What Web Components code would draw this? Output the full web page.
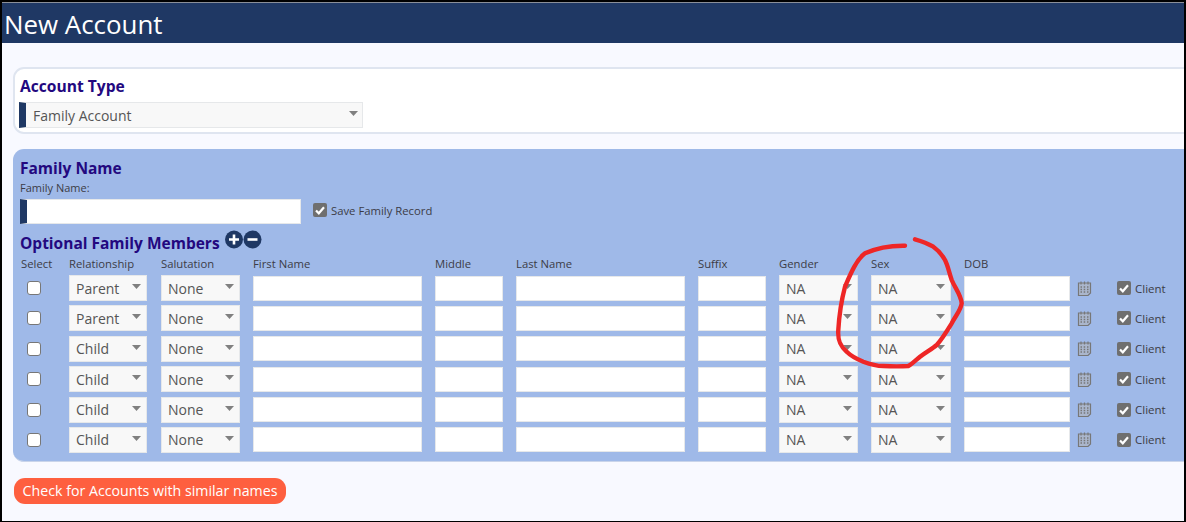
<!DOCTYPE html>
<html lang="en">
<head>
  <meta charset="UTF-8">
  <title>New Account</title>
  <style>
    html, body {
      margin: 0;
      height: 522px;
      overflow: hidden;
      background: #000;
    }
    body {
      font-family: "Open Sans", "Liberation Sans", sans-serif;
    }
  </style>
</head>
<body>
  <account-page>
    <title-bar>New Account</title-bar>
    <form-card heading="Account Type">
      <pick-list value="Family Account" marked style="width:344px"></pick-list>
    </form-card>
    <family-panel></family-panel>
    <orange-button>Check for Accounts with similar names</orange-button>
  </account-page>

  <script>
    const ARROW = '<svg width="9" height="5" viewBox="0 0 9 5"><path d="M0 0h9L4.500 5z" fill="#808080"/></svg>';
    const CHECK = '<svg width="14" height="14" viewBox="0 0 14 14"><rect width="14" height="14" rx="2" fill="#6f6f6f"/><path d="M3 7.500l2.800 2.800L11 4.200" fill="none" stroke="#fff" stroke-width="2.200"/></svg>';
    const COLUMNS = '52px 78px 14px 79px 13px 169px 13px 68px 13px 169px 13px 68px 13px 79px 13px 80px 13px 106px 7px 15px 25px 14px 4px auto';

    class AccountPage extends HTMLElement {
      constructor() {
        super();
        this.attachShadow({ mode: 'open' }).innerHTML = `
          <style>
            :host {
              display: block;
              position: relative;
              box-sizing: border-box;
              width: 1182px;
              height: 519px;
              margin: 2px 2px 1px 2px;
              border-top: 1px solid #8a8f99;
              background: #f8f9ff;
              overflow: hidden;
            }
            svg {
              position: absolute;
              left: -2px;
              top: -3px;
              pointer-events: none;
            }
          </style>
          <slot></slot>
          <svg width="1186" height="522" viewBox="0 0 1186 522">
            <path d="M905 245.700C893 245.500 880 246.500 865 253.300C856 260 850 275 845 286.700C841.500 300 839 318 838.300 330C837.500 340 840 346 846.700 351.700C852 357 858 359.500 863.300 361.700C872 365 878 366 883.300 366C892 366.500 902 366.500 908.300 366C912 364 916 360 920 356.700C926 352 932 349 936.700 345C942 339 947 331 951.700 323.300C956 315 961 310 961.700 303.300C961 295 955 288 951.700 280C949 272 948 266 945 260C941 253 938 250 933.300 246.700C927 243 921 241 915 239.300" fill="none" stroke="#ee2626" stroke-width="4.400" stroke-linecap="round" stroke-linejoin="round"/>
          </svg>
        `;
      }
    }

    class TitleBar extends HTMLElement {
      constructor() {
        super();
        this.attachShadow({ mode: 'open' }).innerHTML = `
          <style>
            :host {
              display: block;
              height: 40px;
              padding-left: 2px;
              background: #1f3864;
              color: #fff;
              font-size: 25.900px;
              line-height: 43px;
            }
          </style>
          <slot></slot>
        `;
      }
    }

    class FormCard extends HTMLElement {
      constructor() {
        super();
        this.attachShadow({ mode: 'open' }).innerHTML = `
          <style>
            :host {
              display: block;
              box-sizing: border-box;
              width: 1190px;
              height: 67px;
              margin: 24px 0 0 11px;
              padding: 6px 0 0 4px;
              background: #fff;
              border: 2px solid #dfe5f0;
              border-radius: 11px;
            }
            h2 {
              margin: 0 0 5px 1px;
              color: #23087f;
              font-size: 15.600px;
              font-weight: 700;
              line-height: 22px;
            }
          </style>
          <h2></h2>
          <slot></slot>
        `;
        this.shadowRoot.querySelector('h2').textContent = this.getAttribute('heading');
      }
    }

    class PickList extends HTMLElement {
      constructor() {
        super();
        this.attachShadow({ mode: 'open' }).innerHTML = `
          <style>
            :host {
              display: flex;
              align-items: center;
              justify-content: space-between;
              box-sizing: border-box;
              height: 26px;
              padding: 0 5px 0 6px;
              background: #f8f8f8;
              border: 1px solid #e6e8ea;
              color: #555;
              font-size: 14px;
            }
            :host([marked]) {
              border-left: 7px solid #1f3864;
              padding: 0 4px 0 7px;
            }
            svg { margin-top: -3px; }
          </style>
          <span></span>
          ${ARROW}
        `;
        this.shadowRoot.querySelector('span').textContent = this.getAttribute('value');
      }
    }

    class TextBox extends HTMLElement {
      constructor() {
        super();
        this.attachShadow({ mode: 'open' }).innerHTML = `
          <style>
            :host {
              display: block;
              box-sizing: border-box;
              height: 25px;
              background: #fff;
              border: 1px solid #e6e8ea;
            }
            :host([marked]) {
              border-left: 7px solid #1f3864;
            }
          </style>
        `;
      }
    }

    class MemberRow extends HTMLElement {
      constructor() {
        super();
        const relation = this.getAttribute('relation');
        this.attachShadow({ mode: 'open' }).innerHTML = `
          <style>
            :host {
              display: grid;
              grid-template-columns: ${COLUMNS};
              align-items: center;
              height: 25px;
              margin-left: -3px;
              margin-bottom: 5.400px;
              font-size: 11.500px;
              color: #3c3c46;
            }
            .select {
              grid-column: 1;
              box-sizing: border-box;
              width: 14px;
              height: 14px;
              margin-left: 10px;
              background: #fff;
              border: 1px solid #777;
              border-radius: 3px;
            }
            .day { display: flex; }
            .mark { display: flex; }
          </style>
          <div class="select"></div>
          <pick-list value="${relation}" style="grid-column:2"></pick-list>
          <pick-list value="None" style="grid-column:4"></pick-list>
          <text-box style="grid-column:6"></text-box>
          <text-box style="grid-column:8"></text-box>
          <text-box style="grid-column:10"></text-box>
          <text-box style="grid-column:12"></text-box>
          <pick-list value="NA" style="grid-column:14"></pick-list>
          <pick-list value="NA" style="grid-column:16"></pick-list>
          <text-box style="grid-column:18"></text-box>
          <div class="day" style="grid-column:20">
            <svg width="15" height="17" viewBox="0 0 15 17">
              <path d="M1.500 3h12v10l-2.500 2.500h-9.500z" fill="#aab6cc" stroke="#777" stroke-width="1.200"/>
              <path d="M4 1.500v3M7.500 1.500v3M11 1.500v3" stroke="#777" stroke-width="1.200"/>
              <path d="M3.500 7h1.500M6.700 7h1.500M10 7h1.500M3.500 9.500h1.500M6.700 9.500h1.500M10 9.500h1.500M3.500 12h1.500M6.700 12h1.500M10 12h1.500" stroke="#777" stroke-width="1.300"/>
            </svg>
          </div>
          <div class="mark" style="grid-column:22">${CHECK}</div>
          <span style="grid-column:24">Client</span>
        `;
      }
    }

    class FamilyPanel extends HTMLElement {
      constructor() {
        super();
        const heads = [[1, 'Select'], [2, 'Relationship'], [4, 'Salutation'], [6, 'First Name'], [8, 'Middle'], [10, 'Last Name'], [12, 'Suffix'], [14, 'Gender'], [16, 'Sex'], [18, 'DOB']];
        const relations = ['Parent', 'Parent', 'Child', 'Child', 'Child', 'Child'];
        this.attachShadow({ mode: 'open' }).innerHTML = `
          <style>
            :host {
              display: block;
              box-sizing: border-box;
              width: 1190px;
              height: 313px;
              margin: 15px 0 0 11px;
              padding: 8px 0 0 7px;
              background: #9fb9e8;
              border-bottom: 1px solid #c9d4ea;
              border-radius: 11px;
              color: #3c3c46;
            }
            h2 {
              margin: 0;
              color: #23087f;
              font-size: 15.500px;
              font-weight: 700;
              line-height: 22px;
            }
            .label {
              font-size: 11px;
              line-height: 14px;
              margin-top: 2px;
            }
            .name {
              display: flex;
              align-items: center;
              margin-top: 4px;
            }
            .name text-box {
              width: 281px;
            }
            .save {
              display: flex;
              align-items: center;
              gap: 4px;
              margin: -3px 0 0 12px;
              font-size: 11.300px;
            }
            .members {
              display: flex;
              align-items: flex-start;
              margin-top: 8px;
              height: 21px;
            }
            .members svg {
              margin: -2px 0 0 5px;
            }
            .heads {
              display: grid;
              grid-template-columns: ${COLUMNS};
              height: 21px;
              margin: 0 0 1px -3px;
              font-size: 11.300px;
              line-height: 21px;
            }
            .heads span:first-child { margin-left: 4px; }
          </style>
          <h2>Family Name</h2>
          <div class="label">Family Name:</div>
          <div class="name">
            <text-box marked></text-box>
            <div class="save">${CHECK}<span>Save Family Record</span></div>
          </div>
          <div class="members">
            <h2>Optional Family Members</h2>
            <svg width="37" height="19" viewBox="0 0 37 19">
              <circle cx="9" cy="9.500" r="9" fill="#1f3864"/>
              <path d="M4 9.500h10M9 4.500v10" stroke="#fff" stroke-width="2.600"/>
              <circle cx="27.500" cy="9.500" r="9" fill="#1f3864"/>
              <path d="M22.500 9.500h10" stroke="#fff" stroke-width="2.600"/>
            </svg>
          </div>
          <div class="heads">
            ${heads.map(h => `<span style="grid-column:${h[0]}">${h[1]}</span>`).join('')}
          </div>
          ${relations.map(r => `<member-row relation="${r}"></member-row>`).join('')}
        `;
      }
    }

    class OrangeButton extends HTMLElement {
      constructor() {
        super();
        this.attachShadow({ mode: 'open' }).innerHTML = `
          <style>
            :host {
              display: block;
              box-sizing: border-box;
              width: 272px;
              height: 26px;
              margin: 16px 0 0 12px;
              background: #fe5f3f;
              border-radius: 11px;
              color: #fff;
              font-size: 14.200px;
              line-height: 26px;
              text-align: center;
            }
          </style>
          <slot></slot>
        `;
      }
    }

    // children first, so that they are ready when the panel writes its rows
    customElements.define('pick-list', PickList);
    customElements.define('text-box', TextBox);
    customElements.define('member-row', MemberRow);
    customElements.define('title-bar', TitleBar);
    customElements.define('form-card', FormCard);
    customElements.define('family-panel', FamilyPanel);
    customElements.define('orange-button', OrangeButton);
    customElements.define('account-page', AccountPage);
  </script>
</body>
</html>
